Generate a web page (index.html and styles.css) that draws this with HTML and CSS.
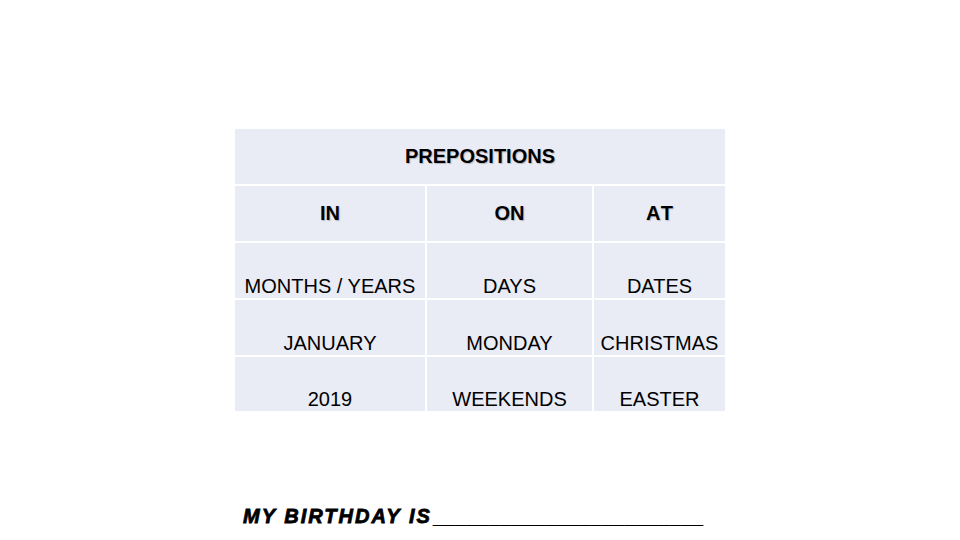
FILE: index.html
```html
<!DOCTYPE html>
<html>
<head>
<meta charset="utf-8">
<link rel="stylesheet" href="styles.css">
</head>
<body>
<div class="page">
  <div class="table">
    <div class="cell head span">PREPOSITIONS</div>
    <div class="cell head">IN</div>
    <div class="cell head">ON</div>
    <div class="cell head at">AT</div>
    <div class="cell body">MONTHS / YEARS</div>
    <div class="cell body">DAYS</div>
    <div class="cell body">DATES</div>
    <div class="cell body">JANUARY</div>
    <div class="cell body">MONDAY</div>
    <div class="cell body">CHRISTMAS</div>
    <div class="cell body">2019</div>
    <div class="cell body">WEEKENDS</div>
    <div class="cell body">EASTER</div>
  </div>
  <p class="birthday"><span class="label">MY BIRTHDAY IS</span><span class="line">________________________</span></p>
</div>
</body>
</html>
```

FILE: styles.css
```css
html, body {
  margin: 0;
  padding: 0;
  background: #ffffff;
}
.page {
  width: 960px;
  height: 540px;
  padding-top: 129px;
  box-sizing: border-box;
  font-family: "Liberation Sans", Arial, sans-serif;
  color: #000;
}
.table {
  margin-left: 235px;
  width: 490px;
  display: grid;
  grid-template-columns: 190px 165px 131px;
  grid-template-rows: 55px 55px 55px 55px 54px;
  gap: 2px;
}
.cell {
  background: #e9ebf5;
  display: flex;
  justify-content: center;
  font-size: 20px;
  white-space: nowrap;
}
.head {
  align-items: center;
  font-weight: bold;
  text-shadow: 1px 1px 1px rgba(0, 0, 0, 0.22);
}
.span {
  grid-column: 1 / 4;
}
.at {
  letter-spacing: 2px;
  padding-left: 2px;
}
.body {
  align-items: flex-end;
  padding-bottom: 0;
}
.birthday {
  margin: 93px 0 0 243px;
  font-size: 20px;
  font-weight: bold;
  font-style: italic;
  white-space: nowrap;
  line-height: 24px;
}
.label {
  letter-spacing: 2px;
  -webkit-text-stroke: 0.8px #000;
}
.line {
  margin-left: 2px;
  letter-spacing: 0.15px;
}
```
